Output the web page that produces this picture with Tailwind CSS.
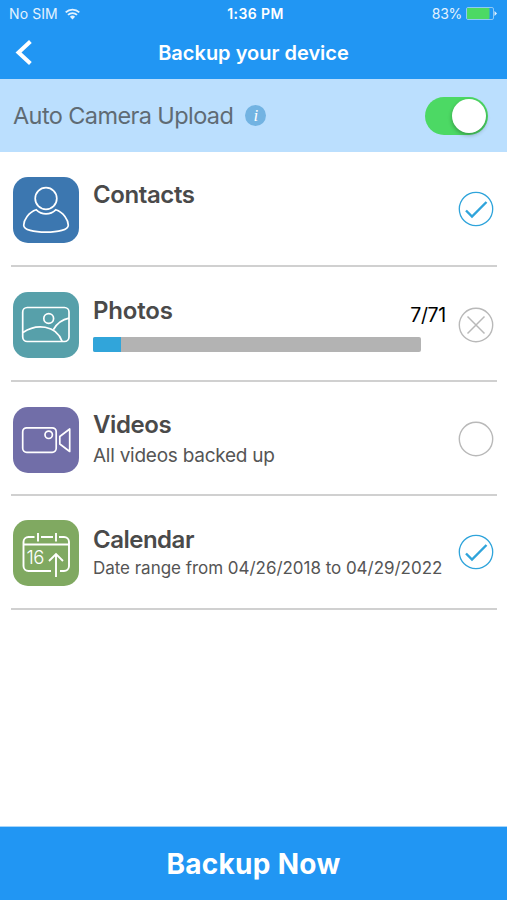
<!DOCTYPE html>
<html lang="en">
<head>
  <meta charset="UTF-8">
  <title>Backup your device</title>
  <script src="https://cdn.jsdelivr.net/npm/@tailwindcss/browser@4"></script>
</head>
<body class="bg-white h-[900px] w-[507px] flex flex-col overflow-hidden font-['Inter',sans-serif] text-[#4a4a4a] whitespace-nowrap">

  <header class="h-[79px] shrink-0 bg-[#2196f3] text-white">
    <!-- Status bar -->
    <div class="h-[27px] grid grid-cols-3 items-center pl-[9px] pr-[10px] text-[14px]">
      <div class="flex items-center gap-[7px] text-[#e3f2fe]">
        <span class="tracking-[0.1px]">No SIM</span>
        <svg class="w-[15px] h-[12px]" viewBox="0 0 15 12" fill="none" stroke="currentColor" stroke-width="1.8">
          <path d="M0.7 4.4a9.6 9.6 0 0 1 13.6 0M3 6.9a6.4 6.4 0 0 1 9 0"/>
          <path d="M4.9 8.7a3.7 3.7 0 0 1 5.2 0L7.5 11.4z" fill="currentColor" stroke="none"/>
        </svg>
      </div>
      <span class="pl-[5px] text-center font-semibold tracking-[0.4px]">1:36 PM</span>
      <div class="flex items-center justify-end gap-[4px] text-[#e3f2fe]">
        <span class="tracking-[-0.3px]">83%</span>
        <svg class="w-[31px] h-[13px]" viewBox="0 0 31 13">
          <rect x="0.5" y="0.5" width="27" height="12" rx="1.5" fill="none" stroke="#8fc9f5"/>
          <rect x="1" y="1" width="22.5" height="11" rx="1" fill="#4cd964"/>
          <path d="M28.5 4v5l2.5-2.500z" fill="#e3f2fe"/>
        </svg>
      </div>
    </div>
    <!-- Title bar -->
    <div class="h-[52px] grid grid-cols-[60px_1fr_60px] items-center">
      <svg class="ml-[14px] w-5 h-[28px]" viewBox="0 0 20 28" fill="none" stroke="white" stroke-width="4">
        <path d="M16.4 2.5L4.5 13.5l11.900 11"/>
      </svg>
      <h1 class="text-center text-[20px] font-semibold">Backup your device</h1>
    </div>
  </header>

  <section class="h-[73px] shrink-0 bg-[#bbdffe] flex items-center pl-[13px] pr-[19px]">
    <span class="pt-px text-[23.5px] tracking-[-0.6px] text-[#5f6b74]">Auto Camera Upload</span>
    <span class="ml-[12px] w-[21px] h-[21px] rounded-full bg-[#72b3e2] text-white flex items-center justify-center font-['Liberation_Serif',serif] italic text-[17px] leading-none">i</span>
    <span class="ml-auto w-[63px] h-[38px] rounded-full bg-[#4cd964] flex items-center justify-end pr-[2px]">
      <span class="w-[34px] h-[34px] rounded-full bg-white shadow-[0_2px_4px_rgba(0,0,0,0.3)]"></span>
    </span>
  </section>

  <main class="flex-1 pl-[11px] pr-[10px]">
    <!-- Contacts -->
    <div class="h-[115px] border-b-2 border-[#d0d0d0] pt-[25px] pl-[2px] pr-[3px] flex items-start">
      <svg class="w-[66px] h-[66px] shrink-0" viewBox="0 0 66 66" fill="none" stroke="white" stroke-width="1.7">
        <rect width="66" height="66" rx="15" fill="#3c77b0" stroke="none"/>
        <circle cx="33" cy="21.5" r="10.8"/>
        <path d="M23.3 32.8C15.5 35.2 10.7 43 10.7 48.2c0 4.600 10 7 22.300 7s22.300-2.400 22.300-7c0-5.200-4.800-13-12.600-15.400-2.500 2.500-6 4-9.700 4s-7.200-1.500-9.700-4z"/>
      </svg>
      <div class="ml-[14px] flex-1">
        <h2 class="text-[24px] leading-[36px] font-semibold tracking-[-0.4px]">Contacts</h2>
      </div>
      <svg class="mt-[14px] w-9 h-9 shrink-0" viewBox="0 0 36 36" fill="none" stroke="#2fa4db">
        <circle cx="18" cy="18" r="16.700" stroke-width="1.300"/>
        <path d="M8 19.500l6 6L28.500 11" stroke-width="2.400"/>
      </svg>
    </div>

    <!-- Photos -->
    <div class="h-[115px] border-b-2 border-[#d0d0d0] pt-[25px] pl-[2px] pr-[3px] flex items-start">
      <svg class="w-[66px] h-[66px] shrink-0" viewBox="0 0 66 66" fill="none" stroke="white" stroke-width="1.700">
        <rect width="66" height="66" rx="15" fill="#57a0aa" stroke="none"/>
        <rect x="9.700" y="15.500" width="46.300" height="34" rx="4.500"/>
        <circle cx="35.700" cy="26.500" r="4.900"/>
        <path d="M10 40.500C23 31.500 43 32.500 49.200 49.500M40.500 37.500C44 31.500 49.500 27.500 56 26.200"/>
      </svg>
      <div class="ml-[14px] flex-1">
        <div class="h-[45px] flex items-start justify-between pr-[12px]">
          <h2 class="text-[24px] leading-[38px] font-semibold tracking-[-0.2px]">Photos</h2>
          <span class="text-[19.5px] leading-[46px] tracking-[-0.3px] text-black">7/71</span>
        </div>
        <div class="h-[15px] w-[328px] rounded-[2px] bg-[#b3b3b3] overflow-hidden">
          <div class="h-full bg-[#31a5da]" style="width: 8.6%"></div>
        </div>
      </div>
      <svg class="mt-[15px] w-9 h-9 shrink-0" viewBox="0 0 36 36" fill="none" stroke="#b9b9b9">
        <circle cx="18" cy="18" r="16.700" stroke-width="1.400"/>
        <path d="M9.500 9.500l17 17M26.500 9.500l-17 17" stroke-width="1.500"/>
      </svg>
    </div>

    <!-- Videos -->
    <div class="h-[114px] border-b-2 border-[#d0d0d0] pt-[25px] pl-[2px] pr-[3px] flex items-start">
      <svg class="w-[66px] h-[66px] shrink-0" viewBox="0 0 66 66" fill="none" stroke="white" stroke-width="1.700">
        <rect width="66" height="66" rx="15" fill="#716ea8" stroke="none"/>
        <rect x="9.700" y="20.800" width="33.500" height="24.500" rx="4"/>
        <circle cx="35.700" cy="27.800" r="3.700"/>
        <path d="M46.800 29.500L56.700 22v22.500l-9.900-7.500z" stroke-linejoin="round"/>
      </svg>
      <div class="ml-[14px] flex-1">
        <h2 class="text-[24px] leading-[36px] font-semibold tracking-[-0.4px]">Videos</h2>
        <p class="text-[19px] leading-[25px] tracking-[-0.25px] text-[#555]">All videos backed up</p>
      </div>
      <svg class="mt-[14px] w-9 h-9 shrink-0" viewBox="0 0 36 36" fill="none" stroke="#b9b9b9">
        <circle cx="18" cy="18" r="16.700" stroke-width="1.400"/>
      </svg>
    </div>

    <!-- Calendar -->
    <div class="h-[114px] border-b-2 border-[#d0d0d0] pt-[24px] pl-[2px] pr-[3px] flex items-start">
      <svg class="w-[66px] h-[66px] shrink-0" viewBox="0 0 66 66" fill="none" stroke="white" stroke-width="1.900">
        <rect width="66" height="66" rx="15" fill="#80a961" stroke="none"/>
        <path d="M21.500 17H15.500a5 5 0 0 0-5 5v24a5 5 0 0 0 5 5h22.500M28 17h12M46 17H51a5 5 0 0 1 5 5v24a5 5 0 0 1-5 5h-4M11 24.500h45M25 13v8.500M43 13v8.500M43 57V34M36 41l7-7 7 7"/>
        <text x="13.500" y="43.500" font-size="18.500" font-weight="300" fill="white" stroke="none" font-family="Inter, sans-serif" letter-spacing="-0.500">16</text>
      </svg>
      <div class="ml-[14px] flex-1">
        <h2 class="text-[24px] leading-[40px] font-semibold tracking-[-0.5px]">Calendar</h2>
        <p class="text-[17px] leading-[17px] tracking-[-0.03px] text-[#555]">Date range from 04/26/2018 to 04/29/2022</p>
      </div>
      <svg class="mt-[14px] w-9 h-9 shrink-0" viewBox="0 0 36 36" fill="none" stroke="#2fa4db">
        <circle cx="18" cy="18" r="16.700" stroke-width="1.300"/>
        <path d="M8 19.500l6 6L28.500 11" stroke-width="2.400"/>
      </svg>
    </div>
  </main>

  <button class="h-[74px] shrink-0 bg-[#2196f3] border-t border-[#a6d5fa] text-white text-[28px] font-bold tracking-[0.3px]">Backup Now</button>

</body>
</html>
